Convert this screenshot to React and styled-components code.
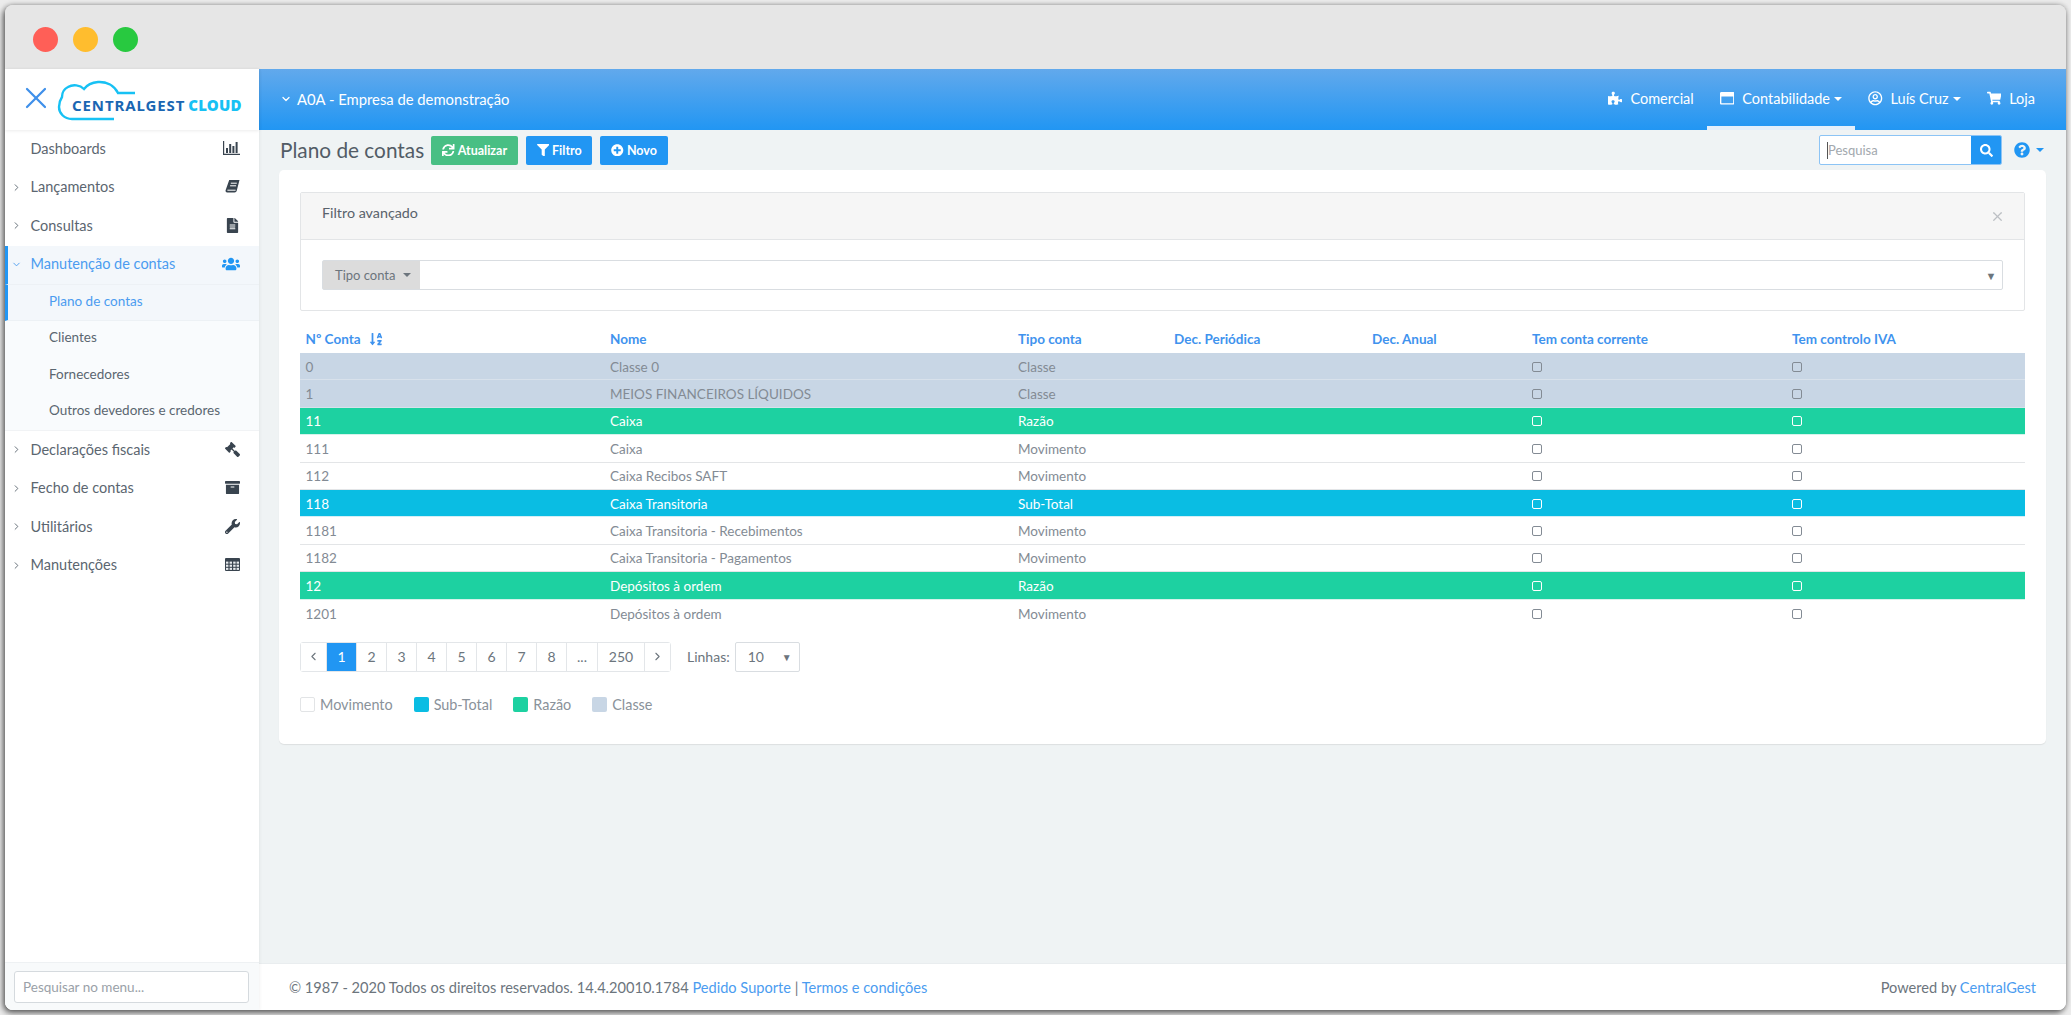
import React from "react";
import styled, { createGlobalStyle } from "styled-components";
import { ChevronDown, ChevronLeft, ChevronRight, X } from "lucide-react";
import {
  FaArchive,
  FaFileAlt,
  FaFilter,
  FaGavel,
  FaPlusCircle,
  FaPuzzlePiece,
  FaQuestionCircle,
  FaRegUserCircle,
  FaRegWindowMaximize,
  FaSearch,
  FaShoppingCart,
  FaSortAlphaDown,
  FaSync,
  FaUsers,
  FaWrench,
} from "react-icons/fa";

const FONT = `Lato, "Open Sans", "Liberation Sans", sans-serif`;
const BLUE = "#2196f3";
const COLUMNS = "304.5px 408px 156px 198px 160px 260px 1fr";

const GlobalStyle = createGlobalStyle`
  html, body {
    margin: 0;
    height: 100%;
    background: #ececec;
  }
  body {
    font-family: ${FONT};
    color: #6c757d;
  }
  * {
    box-sizing: border-box;
  }
`;

const Page = styled.div`
  width: 2071px;
  height: 1015px;
  padding: 5px;
  overflow: hidden;
`;

const Window = styled.div`
  height: 100%;
  display: flex;
  flex-direction: column;
  border-radius: 8px;
  overflow: hidden;
  box-shadow: 0 0 5px rgba(0, 0, 0, 0.3), -2px 3px 6px rgba(0, 0, 0, 0.55);
`;

const TitleBar = styled.div`
  flex: 0 0 64px;
  display: flex;
  align-items: center;
  gap: 15px;
  padding: 4px 0 0 27.5px;
  background: #e6e6e6;
`;

const Light = styled.span`
  width: 25px;
  height: 25px;
  border-radius: 50%;
  background: ${(p) => p.color};
`;

const Body = styled.div`
  flex: 1;
  display: flex;
  min-height: 0;
`;

const Sidebar = styled.aside`
  flex: 0 0 254px;
  display: flex;
  flex-direction: column;
  background: #fff;
  z-index: 1;
  box-shadow: 1px 0 3px rgba(0, 0, 0, 0.05);
`;

const Brand = styled.div`
  flex: 0 0 61px;
  display: flex;
  align-items: center;
  padding-left: 13px;
  gap: 0;
  color: #3f90ea;
  box-shadow: 0 1px 3px rgba(0, 0, 0, 0.08);

  > svg {
    flex: none;
    margin-right: -2px;
    margin-top: -3px;
  }
`;

const Logo = styled.div`
  position: relative;
  width: 190px;
  height: 61px;
`;

const LogoWord = styled.span`
  position: absolute;
  left: 20px;
  top: 28px;
  font-family: "Noto Sans", sans-serif;
  font-size: 15px;
  line-height: 17px;
  font-weight: 700;
  letter-spacing: 0.9px;
  white-space: nowrap;
  color: #1a66b2;

  b {
    color: #17c1f4;
    letter-spacing: 0.2px;
    margin-left: 3px;
  }
`;

const Menu = styled.nav`
  flex: 1;
`;

const MenuItem = styled.div`
  position: relative;
  height: 38.5px;
  display: flex;
  align-items: center;
  padding: 0 19px 2px 25.5px;
  font-size: 14.5px;
  color: ${(p) => (p.$active ? "#4b9cf0" : "#5b6670")};
  background: ${(p) => (p.$active ? "#f3f7fb" : "transparent")};
  border-left: ${(p) => (p.$active ? `3px solid ${BLUE}` : "none")};
  padding-left: ${(p) => (p.$active ? "22.5px" : "25.5px")};

  svg.chev {
    position: absolute;
    left: ${(p) => (p.$active ? "3px" : "6px")};
    top: 13px;
    color: ${(p) => (p.$active ? "#4b9cf0" : "#5b6670")};
  }
`;

const MenuLabel = styled.span`
  flex: 1;
`;

const MenuIcon = styled.span`
  display: flex;
  font-size: ${(p) => p.$size || "15px"};
  color: ${(p) => (p.$active ? BLUE : "#39444f")};

  svg.flip {
    transform: scaleX(-1);
  }
`;

const SubMenu = styled.div`
  background: #f9fbfd;
  border-bottom: 1px solid #f1f3f5;
`;

const SubItem = styled.div`
  height: 36.5px;
  display: flex;
  align-items: center;
  padding-left: ${(p) => (p.$active ? "41px" : "44px")};
  padding-bottom: 3px;
  font-size: 13.5px;
  color: ${(p) => (p.$active ? "#4b9cf0" : "#5b6670")};
  background: ${(p) => (p.$active ? "#f3f7fb" : "transparent")};
  border-left: ${(p) => (p.$active ? `3px solid ${BLUE}` : "none")};
  border-top: ${(p) => (p.$active ? "1px solid #edf1f5" : "none")};
  border-bottom: ${(p) => (p.$active ? "1px solid #edf1f5" : "none")};
`;

const SideFoot = styled.div`
  flex: 0 0 47px;
  padding: 8px 10px 7px 9px;
  background: #f8fafb;
  border-top: 1px solid #eef1f3;
`;

const SideSearch = styled.input`
  width: 100%;
  height: 32px;
  padding: 0 8px;
  font-family: ${FONT};
  font-size: 13.5px;
  background: #fff;
  border: 1px solid #d5dade;
  border-radius: 3px;
  outline: none;

  &::placeholder {
    color: #9aa1a8;
    opacity: 1;
  }
`;

const Main = styled.main`
  flex: 1;
  min-width: 0;
  display: flex;
  flex-direction: column;
  background: #eff3f4;
`;

const Header = styled.header`
  flex: 0 0 61px;
  display: flex;
  align-items: stretch;
  justify-content: space-between;
  padding: 0 18px 0 21px;
  color: #fff;
  background: linear-gradient(#62a9ec, ${BLUE});
`;

const Company = styled.div`
  display: flex;
  align-items: center;
  gap: 5px;
  padding-bottom: 2px;
  font-size: 14.8px;
`;

const Nav = styled.div`
  display: flex;
  align-items: stretch;
`;

const NavItem = styled.div`
  display: flex;
  align-items: center;
  gap: 8px;
  padding: 0 13px 2px;
  border-bottom: 4px solid ${(p) => (p.$active ? "#e3effb" : "transparent")};
  border-top: 4px solid transparent;
  font-size: 14.5px;
`;

const Caret = styled.i`
  display: inline-block;
  margin-left: ${(p) => p.$gap || "-4px"};
  border-top: 4px solid currentColor;
  border-left: 4px solid transparent;
  border-right: 4px solid transparent;
`;

const Toolbar = styled.div`
  flex: 0 0 40px;
  display: flex;
  align-items: center;
  padding: 0 22px 0 21px;
`;

const Title = styled.h1`
  margin: 0 7px 2px 0;
  font-size: 20.8px;
  font-weight: 400;
  color: #525c66;
`;

const Button = styled.button`
  height: 29px;
  width: ${(p) => p.$w};
  margin-right: 8px;
  display: flex;
  align-items: center;
  justify-content: center;
  gap: 3px;
  font-family: ${FONT};
  font-size: 12.5px;
  font-weight: 700;
  color: #fff;
  border: none;
  border-radius: 2px;
  background: ${(p) => p.$bg || BLUE};
`;

const Grow = styled.div`
  flex: 1;
`;

const SearchBox = styled.div`
  width: 183px;
  height: 30px;
  display: flex;
  align-items: center;
  padding-left: 7px;
  background: #fff;
  border: 1px solid #8cc4f5;
  border-radius: 2px;
  overflow: hidden;
`;

const TextCursor = styled.span`
  width: 1px;
  height: 17px;
  background: #555;
`;

const SearchInput = styled.input`
  flex: 1;
  min-width: 0;
  padding: 0;
  font-family: ${FONT};
  font-size: 13px;
  border: none;
  outline: none;

  &::placeholder {
    color: #a2a8ae;
    opacity: 1;
  }
`;

const SearchButton = styled.span`
  flex: 0 0 30px;
  height: 30px;
  display: flex;
  align-items: center;
  justify-content: center;
  color: #fff;
  font-size: 13px;
  background: ${BLUE};
`;

const Help = styled.div`
  width: 42px;
  display: flex;
  align-items: center;
  justify-content: flex-end;
  gap: 6px;
  font-size: 16px;
  color: ${BLUE};
`;

const Card = styled.section`
  margin: 0 20.5px 0 20px;
  height: 574px;
  padding: 22px 21px 0;
  background: #fff;
  border-radius: 5px;
  box-shadow: 0 1px 1px rgba(0, 0, 0, 0.08);
`;

const FilterPanel = styled.div`
  height: 119px;
  border: 1px solid #e3e5e7;
  border-radius: 2px;
`;

const FilterHead = styled.div`
  height: 47px;
  display: flex;
  align-items: center;
  justify-content: space-between;
  padding: 0 19px 8px 21px;
  font-size: 14.3px;
  color: #59626b;
  background: #f6f6f6;
  border-bottom: 1px solid #e3e5e7;

  svg {
    color: #bcc0c4;
    margin-top: 8px;
  }
`;

const FilterBody = styled.div`
  padding: 20px 21px;
`;

const Field = styled.div`
  height: 30px;
  display: flex;
  align-items: center;
  border: 1px solid #d9dde1;
  border-radius: 2px;
`;

const FieldAddon = styled.div`
  width: 97px;
  height: 100%;
  display: flex;
  align-items: center;
  gap: 7px;
  padding-left: 12px;
  font-size: 13px;
  color: #6c757d;
  background: #dcdcdc;
`;

const FieldArrow = styled.span`
  margin-left: auto;
  margin-right: 5px;
  font-size: 11px;
  color: #6c757d;
`;

const Rows = styled.div`
  > div:last-child {
    border-bottom: none;
  }
`;

const Row = styled.div`
  display: grid;
  grid-template-columns: ${COLUMNS};
  align-items: center;
  height: 27.4px;
  padding-top: 1px;
  font-size: 13.5px;
  color: ${(p) => p.$color};
  background: ${(p) => p.$bg};
  border-bottom: 1px solid ${(p) => p.$line};
`;

const HeadRow = styled(Row)`
  height: 42px;
  padding-top: 14px;
  font-weight: 700;
  color: #3f93ee;
  background: #fff;
  border-bottom: none;

  svg {
    font-size: 14px;
  }
`;

const Cell = styled.div`
  display: flex;
  align-items: center;
  gap: 8px;
  padding-left: 5.5px;
  white-space: nowrap;
`;

const Check = styled.span`
  width: 10px;
  height: 10px;
  border: 1.5px solid currentColor;
  border-radius: 2px;
`;

const Pager = styled.div`
  display: flex;
  align-items: center;
  margin-top: 15px;
`;

const PageLinks = styled.div`
  display: flex;
  height: 30px;
  border: 1px solid #e3e6e9;
  border-radius: 3px;
`;

const PageLink = styled.span`
  width: ${(p) => p.$w || 30}px;
  display: flex;
  align-items: center;
  justify-content: center;
  font-size: 14px;
  color: ${(p) => (p.$active ? "#fff" : "#6c757d")};
  background: ${(p) => (p.$active ? BLUE : "#fff")};
  border-right: 1px solid #e3e6e9;

  &:last-child {
    border-right: none;
  }
`;

const PageSize = styled.div`
  display: flex;
  align-items: center;
  margin-left: 16px;
  gap: 5px;
  font-size: 14px;
`;

const SizeSelect = styled.div`
  width: 65px;
  height: 30px;
  display: flex;
  align-items: center;
  justify-content: space-between;
  padding: 0 7px 0 12px;
  border: 1px solid #d9dde1;
  border-radius: 2px;

  i {
    font-style: normal;
    font-size: 10px;
  }
`;

const Legend = styled.div`
  display: flex;
  align-items: center;
  gap: 21px;
  margin-top: 24px;
  font-size: 14.4px;
  color: #8a929a;
`;

const LegendItem = styled.span`
  display: flex;
  align-items: center;
  gap: 5px;
`;

const Swatch = styled.span`
  width: 15px;
  height: 15px;
  border-radius: 2px;
  background: ${(p) => p.$bg};
  border: ${(p) => (p.$outlined ? "1px solid #e2e4e6" : "none")};
`;

const Spacer = styled.div`
  flex: 1;
`;

const Footer = styled.footer`
  flex: 0 0 47px;
  display: flex;
  align-items: center;
  justify-content: space-between;
  padding: 0 30px;
  font-size: 14.6px;
  color: #6c757d;
  background: #fff;
  border-top: 1px solid #e9edef;
`;

const FootLink = styled.span`
  color: #4b9cf0;
`;

const ChartIcon = () => (
  <svg width="17" height="14" viewBox="0 0 17 14" fill="currentColor">
    <path d="M.6 0v13.4H17" fill="none" stroke="currentColor" strokeWidth="1.2" />
    <rect x="3" y="7" width="2" height="5" />
    <rect x="6.2" y="3" width="2" height="9" />
    <rect x="9.4" y="5" width="2" height="7" />
    <rect x="12.6" y="1" width="2" height="11" />
  </svg>
);

const BookIcon = () => (
  <svg width="15" height="15" viewBox="0 0 15 15" fill="currentColor">
    <path d="M4.2 1h10.3l-2.7 10.6c-.3 1.2-1 1.9-2.3 1.9H2.2C.9 13.5.3 12.5.6 11.3z" />
    <path
      d="M5.8 4.2h6M5.1 6.8h6M2.4 11.2h8.2"
      stroke="#fff"
      strokeWidth="1"
      fill="none"
    />
  </svg>
);

const GridIcon = () => (
  <svg width="15" height="13" viewBox="0 0 15 13" fill="currentColor">
    <rect width="15" height="13" rx="1" />
    {[1, 4.6, 8.2, 11.6].map((x) =>
      [3.6, 6.7, 9.8].map((y) => (
        <rect key={`${x}-${y}`} x={x} y={y} width="2.4" height="2.1" fill="#e8ebee" />
      ))
    )}
  </svg>
);

const lights = ["#ff5f57", "#ffbd2e", "#28c940"];

const menuTop = [
  { label: "Dashboards", icon: <ChartIcon />, noChevron: true },
  { label: "Lançamentos", icon: <BookIcon /> },
  { label: "Consultas", icon: <FaFileAlt /> },
];
const menuBottom = [
  { label: "Declarações fiscais", icon: <FaGavel className="flip" /> },
  { label: "Fecho de contas", icon: <FaArchive /> },
  { label: "Utilitários", icon: <FaWrench /> },
  { label: "Manutenções", icon: <GridIcon /> },
];
const subItems = ["Clientes", "Fornecedores", "Outros devedores e credores"];

const rowStyles = {
  Classe: { $bg: "#c8d6e5", $color: "#838b94", $line: "#d8e1eb" },
  "Razão": { $bg: "#1dd1a1", $color: "#fff", $line: "#d5f3eb" },
  "Sub-Total": { $bg: "#0abde3", $color: "#fff", $line: "#d3eff6" },
  Movimento: { $bg: "#fff", $color: "#838b94", $line: "#e3e5e7" },
};

const accounts = [
  ["0", "Classe 0", "Classe"],
  ["1", "MEIOS FINANCEIROS LÍQUIDOS", "Classe"],
  ["11", "Caixa", "Razão"],
  ["111", "Caixa", "Movimento"],
  ["112", "Caixa Recibos SAFT", "Movimento"],
  ["118", "Caixa Transitoria", "Sub-Total"],
  ["1181", "Caixa Transitoria - Recebimentos", "Movimento"],
  ["1182", "Caixa Transitoria - Pagamentos", "Movimento"],
  ["12", "Depósitos à ordem", "Razão"],
  ["1201", "Depósitos à ordem", "Movimento"],
];

const pages = [
  { label: <ChevronLeft size={13} />, w: 26 },
  { label: "1", active: true },
  { label: "2" },
  { label: "3" },
  { label: "4" },
  { label: "5" },
  { label: "6" },
  { label: "7" },
  { label: "8" },
  { label: "...", w: 31 },
  { label: "250", w: 47 },
  { label: <ChevronRight size={13} />, w: 25 },
];

const SideItem = ({ item }) => (
  <MenuItem>
    {!item.noChevron && <ChevronRight className="chev" size={11} />}
    <MenuLabel>{item.label}</MenuLabel>
    <MenuIcon>{item.icon}</MenuIcon>
  </MenuItem>
);

const App = () => {
  return (
    <Page>
      <GlobalStyle />
      <Window>
        <TitleBar>
          {lights.map((color) => (
            <Light key={color} color={color} />
          ))}
        </TitleBar>
        <Body>
          <Sidebar>
            <Brand>
              <X size={36} strokeWidth={1.5} />
              <Logo>
                <svg width="190" height="61" viewBox="0 0 190 61" fill="none">
                  <path
                    d="M83 24 H66 C62 16 54 12.5 46 13 C40 13.5 35 16 32 20 C28 16 21 15 16 18 C12 20 10 24 10 28 C8 31 7 34 7 38 C7 44 12 50 20 50 H62"
                    stroke="#17c1f4"
                    strokeWidth="2.4"
                  />
                </svg>
                <LogoWord>
                  CENTRALGEST<b>CLOUD</b>
                </LogoWord>
              </Logo>
            </Brand>
            <Menu>
              {menuTop.map((item) => (
                <SideItem key={item.label} item={item} />
              ))}
              <MenuItem $active>
                <ChevronDown className="chev" size={11} />
                <MenuLabel>Manutenção de contas</MenuLabel>
                <MenuIcon $active $size="18px">
                  <FaUsers />
                </MenuIcon>
              </MenuItem>
              <SubMenu>
                <SubItem $active>Plano de contas</SubItem>
                {subItems.map((label) => (
                  <SubItem key={label}>{label}</SubItem>
                ))}
              </SubMenu>
              {menuBottom.map((item) => (
                <SideItem key={item.label} item={item} />
              ))}
            </Menu>
            <SideFoot>
              <SideSearch placeholder="Pesquisar no menu..." />
            </SideFoot>
          </Sidebar>
          <Main>
            <Header>
              <Company>
                <ChevronDown size={12} strokeWidth={2.5} />
                A0A - Empresa de demonstração
              </Company>
              <Nav>
                <NavItem>
                  <FaPuzzlePiece />
                  Comercial
                </NavItem>
                <NavItem $active>
                  <FaRegWindowMaximize />
                  Contabilidade
                  <Caret />
                </NavItem>
                <NavItem>
                  <FaRegUserCircle />
                  Luís Cruz
                  <Caret />
                </NavItem>
                <NavItem>
                  <FaShoppingCart />
                  Loja
                </NavItem>
              </Nav>
            </Header>
            <Toolbar>
              <Title>Plano de contas</Title>
              <Button $w="87px" $bg="#48bf84">
                <FaSync />
                Atualizar
              </Button>
              <Button $w="66px">
                <FaFilter />
                Filtro
              </Button>
              <Button $w="68px">
                <FaPlusCircle />
                Novo
              </Button>
              <Grow />
              <SearchBox>
                <TextCursor />
                <SearchInput placeholder="Pesquisa" />
                <SearchButton>
                  <FaSearch />
                </SearchButton>
              </SearchBox>
              <Help>
                <FaQuestionCircle />
                <Caret $gap="0" />
              </Help>
            </Toolbar>
            <Card>
              <FilterPanel>
                <FilterHead>
                  Filtro avançado
                  <X size={15} />
                </FilterHead>
                <FilterBody>
                  <Field>
                    <FieldAddon>
                      Tipo conta
                      <Caret $gap="0" />
                    </FieldAddon>
                    <FieldArrow>▼</FieldArrow>
                  </Field>
                </FilterBody>
              </FilterPanel>
              <HeadRow>
                <Cell>
                  Nº Conta
                  <FaSortAlphaDown />
                </Cell>
                <Cell>Nome</Cell>
                <Cell>Tipo conta</Cell>
                <Cell>Dec. Periódica</Cell>
                <Cell>Dec. Anual</Cell>
                <Cell>Tem conta corrente</Cell>
                <Cell>Tem controlo IVA</Cell>
              </HeadRow>
              <Rows>
                {accounts.map(([code, name, type]) => (
                  <Row key={code} {...rowStyles[type]}>
                    <Cell>{code}</Cell>
                    <Cell>{name}</Cell>
                    <Cell>{type}</Cell>
                    <Cell />
                    <Cell />
                    <Cell>
                      <Check />
                    </Cell>
                    <Cell>
                      <Check />
                    </Cell>
                  </Row>
                ))}
              </Rows>
              <Pager>
                <PageLinks>
                  {pages.map((page, idx) => (
                    <PageLink key={idx} $w={page.w} $active={page.active}>
                      {page.label}
                    </PageLink>
                  ))}
                </PageLinks>
                <PageSize>
                  Linhas:
                  <SizeSelect>
                    10
                    <i>▼</i>
                  </SizeSelect>
                </PageSize>
              </Pager>
              <Legend>
                <LegendItem>
                  <Swatch $bg="#fff" $outlined />
                  Movimento
                </LegendItem>
                <LegendItem>
                  <Swatch $bg="#0abde3" />
                  Sub-Total
                </LegendItem>
                <LegendItem>
                  <Swatch $bg="#1dd1a1" />
                  Razão
                </LegendItem>
                <LegendItem>
                  <Swatch $bg="#c8d6e5" />
                  Classe
                </LegendItem>
              </Legend>
            </Card>
            <Spacer />
            <Footer>
              <span>
                © 1987 - 2020 Todos os direitos reservados. 14.4.20010.1784{" "}
                <FootLink>Pedido Suporte</FootLink> |{" "}
                <FootLink>Termos e condições</FootLink>
              </span>
              <span>
                Powered by <FootLink>CentralGest</FootLink>
              </span>
            </Footer>
          </Main>
        </Body>
      </Window>
    </Page>
  );
};

export default App;
